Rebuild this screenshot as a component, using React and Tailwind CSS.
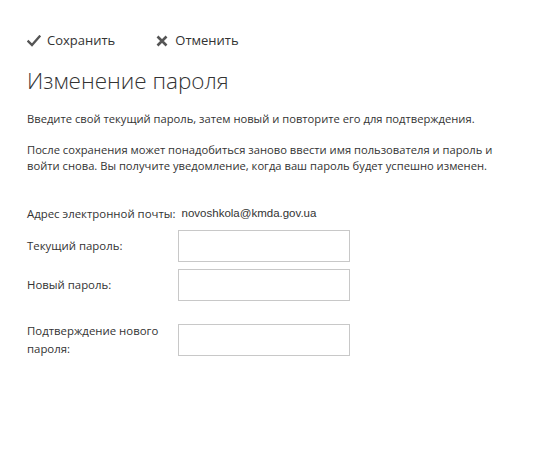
import { useState } from 'react';

const FONT = { fontFamily: '"Open Sans", "Noto Sans", sans-serif' };

function CheckIcon() {
  return (
    <svg width="14" height="12" viewBox="0 0 14 12" className="mr-[6px]">
      <path d="M1.5 6.5 L5 10 L12.5 1.5" fill="none" stroke="#555" strokeWidth="2.4" strokeLinecap="square" />
    </svg>
  );
}

function CrossIcon() {
  return (
    <svg width="12" height="12" viewBox="0 0 12 12" className="mr-[7px]">
      <path d="M1.5 1.5 L10.5 10.5 M10.5 1.5 L1.5 10.5" fill="none" stroke="#555" strokeWidth="2.6" />
    </svg>
  );
}

function Field({ label, value, onChange }) {
  return (
    <div className="flex items-center">
      <label className="w-[151px] text-[11.4px] leading-[18px] text-[#333] pr-2">{label}</label>
      <input type="password" value={value} onChange={e => onChange(e.target.value)}
        className="w-[172px] h-[32px] border border-[#c8c8c8] bg-white outline-none px-2 text-[12px]" />
    </div>
  );
}

export default function App() {
  const [cur, setCur]   = useState('');
  const [next, setNext] = useState('');
  const [conf, setConf] = useState('');

  return (
    <div className="w-[542px] h-[455px] bg-white text-[#333] pl-[27px] pt-[32px]" style={FONT}>
      {/* Toolbar */}
      <div className="flex items-center gap-[41px] text-[13px] text-[#333] h-[18px]">
        <button className="flex items-center"><CheckIcon />Сохранить</button>
        <button className="flex items-center"><CrossIcon />Отменить</button>
      </div>

      <h1 className="mt-[16px] text-[22.5px] font-light leading-[30px] text-[#333]">Изменение пароля</h1>

      <p className="mt-[15px] text-[11.2px] leading-[16px]">
        Введите свой текущий пароль, затем новый и повторите его для подтверждения.
      </p>
      <p className="mt-[15px] text-[11.2px] leading-[16px] w-[485px]">
        После сохранения может понадобиться заново ввести имя пользователя и пароль и войти снова. Вы получите уведомление, когда ваш пароль будет успешно изменен.
      </p>

      <div className="mt-[32px] flex items-center text-[11.4px] leading-[16px]">
        <span className="whitespace-nowrap">Адрес электронной почты:</span>
        <span className="ml-[6px] -mt-[3px] text-[11.5px]" style={{ fontFamily: '"Liberation Sans", Arial, sans-serif' }}>novoshkola@kmda.gov.ua</span>
      </div>

      <div className="mt-[8px] flex flex-col gap-[7px]">
        <Field label="Текущий пароль:" value={cur} onChange={setCur} />
        <Field label="Новый пароль:" value={next} onChange={setNext} />
        <div className="mt-[14px]">
          <Field label="Подтверждение нового пароля:" value={conf} onChange={setConf} />
        </div>
      </div>
    </div>
  );
}
